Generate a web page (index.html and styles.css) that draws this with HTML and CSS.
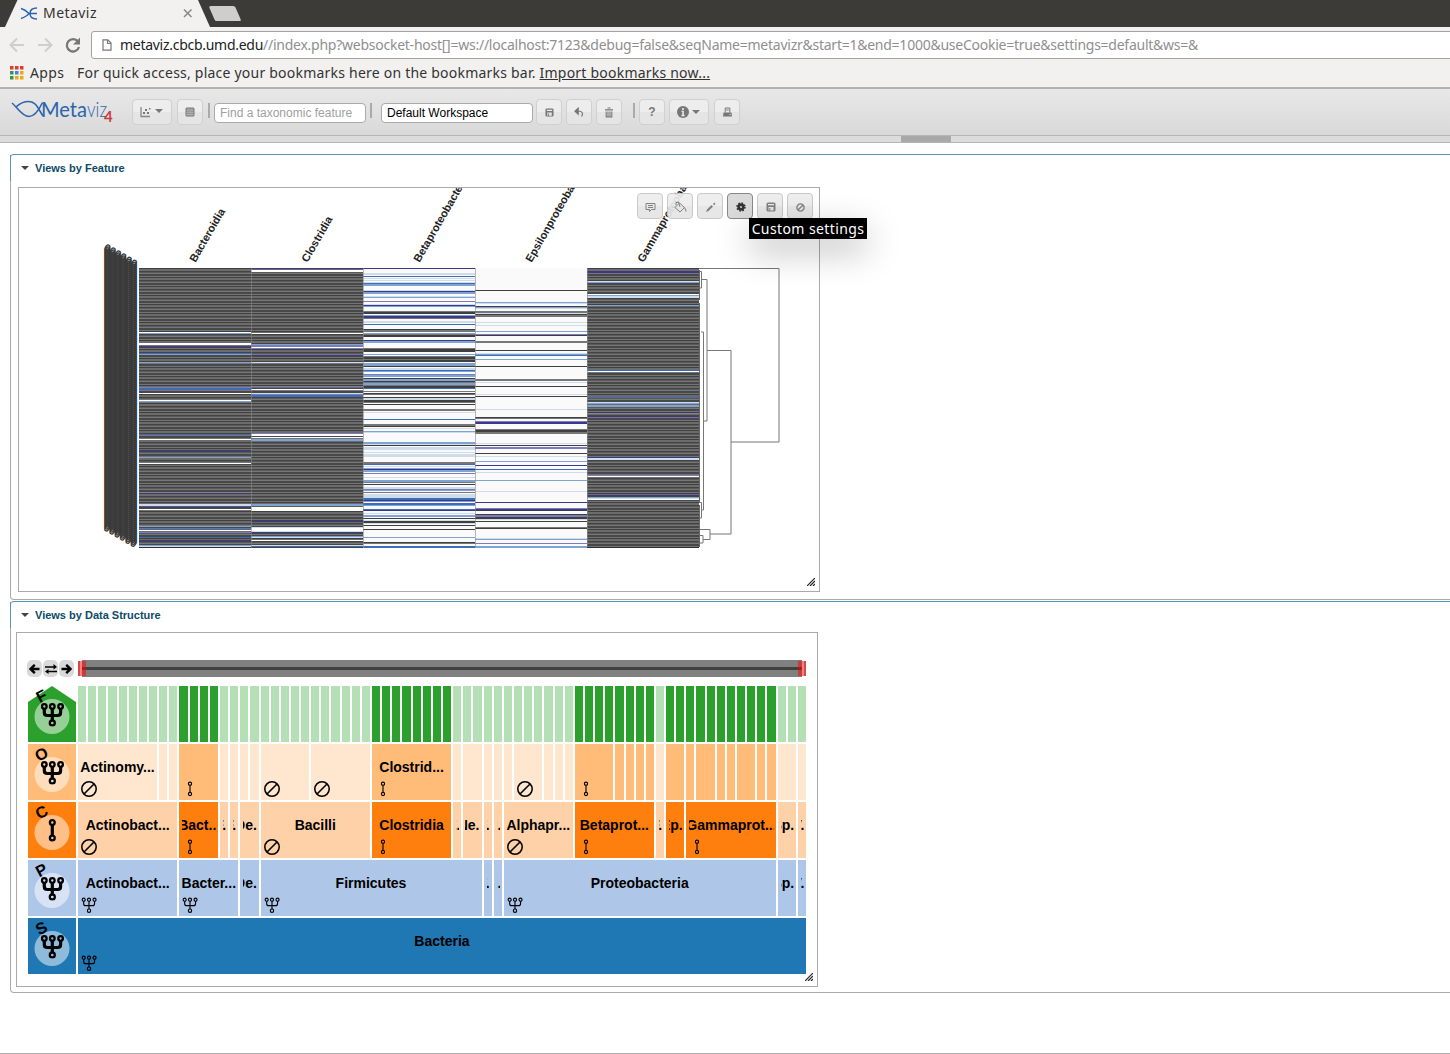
FILE: index.html
```html
<!DOCTYPE html>
<html lang="en">
<head>
<meta charset="utf-8">
<title>Metaviz</title>
<link rel="stylesheet" href="styles.css">
</head>
<body>
<svg class="defs" width="0" height="0" aria-hidden="true">
  <symbol id="fork" viewBox="0 0 24 24"><g fill="none" stroke="currentColor"><circle cx="4" cy="4" r="2.3"/><circle cx="12" cy="4" r="2.3"/><circle cx="20.300" cy="4" r="2.300"/><circle cx="12" cy="20.500" r="2.500"/><path class="stem" d="M4 6.500V10q0 3 3 3H17.300q3 0 3-3V6.500M12 6.500V18"/></g></symbol>
  <symbol id="single" viewBox="0 0 24 24"><g fill="none" stroke="currentColor"><circle cx="12" cy="4" r="2.400"/><circle cx="12" cy="19.500" r="2.400"/><path class="stem" d="M12 6.500V17"/></g></symbol>
  <symbol id="none" viewBox="0 0 24 24"><g fill="none" stroke="currentColor"><circle cx="12" cy="12" r="10.800"/><path d="M4.500 19.500 19.500 4.500"/></g></symbol>
  <symbol id="save" viewBox="0 0 10 10"><path fill="currentColor" fill-rule="evenodd" d="M2 .5h6q1.500 0 1.500 1.500v6q0 1.500-1.500 1.500H2Q.5 9.500.5 8V2Q.5.500 2 .500zM2 2v1.300h6V2zM2.500 5v3.500h5V5zM3.300 6h1v2.500h-1z"/></symbol>
</svg>

<header class="browser">
  <div class="tabs">
    <svg width="250" height="27" viewBox="0 0 250 27"><path d="M5 27 17.500 0H198L210 27z" fill="#f2f1f0"/><path d="M211 6h22q2 0 2.500 1.500l5 11.500q1 2-1 2h-23q-1.500 0-2-1.500l-5-11.500q-.8-2 1.500-2z" fill="#d0cecd"/><path d="M21 8.500q4 1 8 5l-2 2q-3 2-6 3M37 8q-7 0-7 5.500t7 5.500M29 13.500h8" stroke="#2c64ad" stroke-width="1.500" fill="none"/><path d="m184 9.500 7.500 7.500m0-7.500-7.500 7.500" stroke="#888" stroke-width="1.500"/></svg>
    <span class="tab-title">Metaviz</span>
  </div>
  <div class="address-row">
    <svg width="90" height="32" viewBox="0 0 90 32"><g fill="none" stroke="#d0cecd" stroke-width="2"><path d="M24 18H11m6-6.500L10.500 18l6.500 6.500M38 18h13m-6-6.500 6.500 6.500-6.500 6.500"/></g><path d="M78 14.500a6.200 6.200 0 1 0 1 5.500" fill="none" stroke="#777" stroke-width="2.300"/><path d="M80 10.500v7h-7z" fill="#777"/></svg>
    <div class="address"><svg width="10" height="12" viewBox="0 0 10 12"><path d="M1 .8h4.800L9 4v7.200H1zM5.500 1v3.500H9" fill="none" stroke="#777" stroke-width="1.200"/></svg><span class="url"><b>metaviz.cbcb.umd.edu</b>//index.php?websocket-host[]=ws://localhost:7123&amp;debug=false&amp;seqName=metavizr&amp;start=1&amp;end=1000&amp;useCookie=true&amp;settings=default&amp;ws=&amp;</span></div>
  </div>
  <div class="bookmarks">
    <svg width="14" height="14" viewBox="0 0 14 14"><path d="M0 0h3.500v3.500H0zM5 0h3.500v3.500H5zM10 0h3.500v3.500H10z" fill="#e33b2e"/><path d="M0 5h3.500v3.500H0zM0 10h3.500v3.500H0z" fill="#2d9a50"/><path d="M5 5h3.500v3.500H5z" fill="#3b83ee"/><path d="M10 5h3.500v3.500H10zM5 10h3.500v3.500H5zM10 10h3.500v3.500H10z" fill="#efaa14"/></svg>
    <span class="apps">Apps</span><span class="hint">For quick access, place your bookmarks here on the bookmarks bar. <u>Import bookmarks now...</u></span>
  </div>
</header>

<nav class="toolbar">
  <svg class="logo" width="104" height="28" viewBox="0 0 104 28"><path d="M1 4C6 8 11 17.500 18 17.500 24 17.500 28 11 31.500 3.500M5 8C9 4 13 2.500 18 2.500c7 0 9 7 14 14.500" fill="none" stroke="#2c64ad" stroke-width="1.600"/><text x="30" y="18" textLength="46" lengthAdjust="spacingAndGlyphs" class="logo-meta">Meta</text><text x="76" y="18" textLength="20" lengthAdjust="spacingAndGlyphs" class="logo-viz">viz</text><text x="93" y="22.500" class="logo-four">4</text></svg>
  <button class="btn wide first"><svg width="24" height="12" viewBox="0 0 24 12"><path d="M1 1v9.500h9" fill="none" stroke="#888" stroke-width="1.300"/><path d="M3 6h2v2H3zM5 3h2v2H5zM7 6h2v2H7zM9 2h1.500v1.500H9zM15 3h8l-4 4z" fill="#777"/></svg></button>
  <button class="btn"><svg width="10" height="10" viewBox="0 0 10 10"><rect x=".5" y=".5" width="9" height="9" rx="1.500" fill="#777"/><path d="M1 3h8M1 5.200h8M1 7.400h8M3 1v8M5 1v8M7 1v8" stroke="#ddd" stroke-width=".5"/></svg></button>
  <i class="sep s1"></i>
  <input class="field f1" placeholder="Find a taxonomic feature">
  <i class="sep s2"></i>
  <input class="field f2" value="Default Workspace">
  <button class="btn save"><svg width="9" height="9"><use href="#save"/></svg></button>
  <button class="btn undo"><svg width="10" height="10" viewBox="0 0 10 10"><path d="M4 .8V4q4.500 0 4.500 3 0 1-1 2.500M4.200 1.200 1 4.200l3.200 3z" fill="none" stroke="#777" stroke-width="1.200"/><path d="M4 1.200 1 4.200l3 3z" fill="#777"/></svg></button>
  <button class="btn trash"><svg width="10" height="11" viewBox="0 0 10 11"><path d="M3.500 1h3M1 2.800h8" stroke="#777" stroke-width="1.200"/><path d="M2.200 4.500v5.500h5.600V4.500M4 4.500V10M6 4.500V10" fill="none" stroke="#777" stroke-width="1.100"/></svg></button>
  <i class="sep s3"></i>
  <button class="btn help">?</button>
  <button class="btn wide info"><svg width="24" height="12" viewBox="0 0 24 12"><circle cx="6" cy="6" r="6" fill="#777"/><path d="M6 2v2M4.500 5.500H6v4M4.500 9.500h3" stroke="#eee" stroke-width="1.600"/><path d="M15 4h8l-4 4z" fill="#777"/></svg></button>
  <button class="btn print"><svg width="9" height="10" viewBox="0 0 9 10"><path d="M2.200 5.500V1h4.600v4.500M3.200 3h2.500" fill="none" stroke="#777"/><path d="M.5 5.500h8L9 9.500H0z" fill="#777"/><path d="M6.500 7.500h1" stroke="#eee"/></svg></button>
</nav>
<div class="splitter"><i></i></div>

<main>
  <section class="panel feature">
    <h2><i></i>Views by Feature</h2>
    <div class="chart heat">
      <svg id="heatmap" width="800" height="403" viewBox="19 188 800 403"></svg>
      <div class="actions">
        <button class="btn"><svg width="11" height="11" viewBox="0 0 11 11"><path d="M1 1.500h9v6H6.500L4.500 9.500v-2H1zM3 3.500h5M3 5.500h5" fill="none" stroke="#777"/></svg></button>
        <button class="btn"><svg width="13" height="12" viewBox="0 0 13 12"><path d="M1 6.500 5.500 2l5 4.500L6 11zM2 4V1.500L4.500 1 6 6M10 6.500q2 1 2 4" fill="none" stroke="#777"/></svg></button>
        <button class="btn"><svg width="11" height="11" viewBox="0 0 11 11"><path d="m1 10 1-2.500 4.500-4.500L8 4.500 3.500 9zM8 2l1.500-1.500L10.500 2 9 3.200z" fill="#777"/></svg></button>
        <button class="btn on"><svg width="10" height="10" viewBox="0 0 10 10"><circle cx="5" cy="5" r="3.700" fill="#333"/><circle cx="5" cy="5" r="4" fill="none" stroke="#333" stroke-width="1.500" stroke-dasharray="1.600 1.540"/><circle cx="5" cy="5" r="1.100" fill="#ccc"/></svg></button>
        <button class="btn"><svg width="10" height="10"><use href="#save"/></svg></button>
        <button class="btn"><svg width="9" height="9" viewBox="0 0 8 8"><circle cx="4" cy="4" r="3.200" fill="none" stroke="#777" stroke-width="1.200"/><path d="m1.500 6.500 5-5" stroke="#777" stroke-width="1.100"/></svg></button>
      </div>
      <div class="tooltip">Custom settings</div>
      <svg class="grip" width="8" height="8"><path d="M0 8 8 0M3 8l5-5M6 8l2-2" stroke="#222" stroke-width="1.200"/></svg>
    </div>
  </section>
  <section class="panel structure">
    <h2><i></i>Views by Data Structure</h2>
    <div class="chart icicle">
      <div class="slider-row">
        <div class="nav">
          <span><svg width="11" height="10" viewBox="0 0 11 10"><path d="M10.500 5H2M5.800.8 1.500 5l4.300 4.200" fill="none" stroke="#000" stroke-width="2.400"/></svg></span>
          <span><svg width="12" height="10" viewBox="0 0 12 10"><path d="M0 3h9M3 7.500h9" stroke="#000" stroke-width="1.500"/><path d="m8.500 0 3.500 3-3.500 2.500zM3.500 5 0 7.500 3.500 10z"/></svg></span>
          <span><svg width="11" height="10" viewBox="0 0 11 10"><path d="M.5 5H9M5.200.8 9.500 5 5.200 9.200" fill="none" stroke="#000" stroke-width="2.400"/></svg></span>
        </div>
        <svg class="slider" width="728" height="17"><path d="M4 0h720v17H4z" fill="#808080"/><path d="M4 7h720v3H4z" fill="#404040"/><path d="M0 1h8v15H0zM720 1h8v15h-8z" fill="#f00" fill-opacity=".5"/><path d="M0 1h2v15H0zM726 1h2v15h-2z" fill="#c04040" fill-opacity=".8"/></svg>
      </div>
      <div class="levels">
        <div class="heads" id="heads"></div>
        <div class="cells" id="cells"></div>
      </div>
      <svg class="grip" width="8" height="8"><path d="M0 8 8 0M3 8l5-5M6 8l2-2" stroke="#222" stroke-width="1.200"/></svg>
    </div>
  </section>
</main>
<script src="charts.js"></script>
</body>
</html>
```
FILE: styles.css
```css
* { box-sizing: border-box; }
html, body { height: 100%; }
body { margin: 0; background: #fff; font-family: "Liberation Sans", Arial, sans-serif; overflow: hidden; display: flex; flex-direction: column; border-bottom: 1px solid #aaa; }
svg { display: block; flex: none; }
.defs { position: absolute; }
button { font: inherit; padding: 0; }

.browser { background: #f2f1f0; height: 89px; flex: none; border-bottom: 2px solid #b3b1b1; font-family: "Noto Sans", sans-serif; font-size: 14px; color: #333; }
.tabs { height: 27px; background: #3c3b37; display: grid; }
.tabs > * { grid-area: 1 / 1; }
.tab-title { padding-left: 43px; line-height: 26px; letter-spacing: .45px; }
.address-row { height: 34px; display: flex; }
.address { margin: 4px -6px 0 1px; height: 28px; flex: 1; border: 1px solid #a5a3a2; border-radius: 3px; background: #fff; display: flex; align-items: center; padding-left: 10px; }
.url { margin-left: 8px; padding-bottom: 2px; color: #8f8f8f; white-space: nowrap; letter-spacing: -.25px; }
.url b { font-weight: 400; color: #222; letter-spacing: -.28px; }
.bookmarks { height: 26px; display: flex; align-items: center; padding: 0 0 3px 10px; white-space: nowrap; }
.bookmarks svg { margin-top: 1px; }
.apps { margin-left: 6px; width: 47px; letter-spacing: .4px; }
.hint { letter-spacing: .22px; }

.toolbar { height: 47px; flex: none; display: flex; align-items: flex-start; padding: 10px 0 0 11px; background: linear-gradient(#e8e8e8, #d9d9d9); border-bottom: 1px solid #b5b5b5; }
.logo text { fill: #2c64ad; font-family: Lato, sans-serif; }
.logo-meta { font-size: 21px; }
.logo-viz { font-size: 21px; font-weight: 300; }
.logo .logo-four { fill: #cf3a3f; font-size: 15px; font-weight: 700; }
.btn { width: 26px; height: 26px; border: 1px solid #d0d0d0; border-radius: 4px; background: linear-gradient(#ededed 50%, #e5e5e5 50%); color: #777; display: flex; align-items: center; justify-content: center; flex: none; }
.toolbar .btn { margin-right: 4px; }
.btn.wide { width: 40px; }
.toolbar .first { margin-left: 17px; margin-right: 5px; }
.sep { width: 2px; height: 15px; background: #aaa; margin-top: 4px; flex: none; }
.s1 { margin-left: 1px; }
.s2 { margin: 4px 9px 0 4px; }
.s3 { margin: 4px 4px 0 7px; }
.field { width: 152px; height: 20px; margin-top: 4px; border: 1px solid #aaa; border-radius: 4px; padding: 0 5px; font: 12px "Liberation Sans", Arial, sans-serif; color: #000; background: #fff; }
.field::placeholder { color: #a0a0a0; }
.f1 { margin-left: 4px; }
.save { margin-left: 3px; }
.help { font-weight: 700; font-size: 12px; }
.toolbar .info { margin-right: 5px; }
.splitter { height: 7px; flex: none; background: #dcdcdc; border-bottom: 1px solid #b5b5b5; padding-left: 901px; }
.splitter i { display: block; width: 50px; height: 6px; background: #a8a8a8; }

main { padding: 11px 0 0 10px; width: 1470px; }
.panel { border: 1px solid #aaa; border-top-color: #5893bb; border-radius: 4px; position: relative; }
.panel::before { content: ""; position: absolute; left: -1px; top: 0; width: 1px; height: 26px; background: #5893bb; }
.feature { height: 446px; margin-bottom: 1px; padding-left: 7px; }
.structure { height: 392px; padding-left: 5px; }
h2 { margin: 0; height: 32px; font-size: 11px; line-height: 26px; color: #0d4a68; display: flex; }
h2 i { border: 4px solid transparent; border-top-color: #444; margin: 11px 6px 0 3px; height: 4px; }
.structure h2 { height: 30px; }
.structure h2 i { margin-left: 5px; }
.chart { position: relative; width: 802px; border: 1px solid #aaa; background: #fff; }
.heat { height: 405px; }
.icicle { height: 355px; padding: 27px 10px 0; }
.grip { position: absolute; right: 4px; bottom: 5px; }
.actions { position: absolute; right: 6px; top: 5px; display: flex; gap: 4px; }
.actions .btn { opacity: .92; border-color: #c5c5c5; padding: 2px 0 0 1px; }
.actions .btn.on { border-color: #888; background: #dadada; opacity: 1; }
.tooltip { position: absolute; left: 730px; top: 30px; width: 118px; height: 21px; background: #000; color: #fff; font: 14px/21px "Noto Sans", sans-serif; letter-spacing: .4px; text-align: center; white-space: nowrap; box-shadow: 0 12px 35px rgba(0, 0, 0, .28); }
.col-label { font: bold 11px "Liberation Sans", Arial, sans-serif; fill: #222; }
.row-label { font: bold 11px "Liberation Sans", Arial, sans-serif; fill: #3a3a3a; }

.slider-row { display: flex; height: 26px; }
.nav { width: 51px; display: flex; gap: 1px; }
.nav span { width: 15px; height: 17px; border-radius: 5px; background: #d9d9d9; display: grid; place-items: center; }
.levels { display: flex; gap: 2px; padding-left: 1px; }
.heads { width: 48px; display: grid; grid-auto-rows: 56px; gap: 2px; }
.heads text { font: bold 16px "Liberation Sans", Arial, sans-serif; }
.heads { --stem: 3.200px; }
.stem { stroke-width: var(--stem, 1.700px); }
.cells { width: 728px; display: grid; grid-template-columns: repeat(72, minmax(0, 1fr)); grid-auto-rows: 56px; gap: 2px; }
.cell { overflow: hidden; font-weight: 700; font-size: 14px; padding: 14px 2px 0; min-width: 0; }
.cell span { display: flex; justify-content: center; overflow: hidden; white-space: nowrap; height: 18px; line-height: 18px; }
.cell.tight { padding-left: 3px; }
.cell.tight svg { margin-left: 0; }
.cell svg { margin: 5px 0 0 1px; width: 16px; height: 16px; stroke-width: 1.700; }
.cell svg.none { stroke-width: 2.300; }
.family { background: #b5dfb5; } .family.sel { background: #2ca02c; }
.order { background: #ffe7cf; } .order.sel { background: #ffbb78; }
.class { background: #ffd1a8; } .class.sel { background: #ff7f0e; }
.phylum { background: #aec7e8; }
.species { background: #1f77b4; }
```
FILE: charts.js
```js
const NS = 'http://www.w3.org/2000/svg';
const heat = document.getElementById('heatmap');
const add = (tag, attrs, text) => {
  const el = document.createElementNS(NS, tag);
  for (const k in attrs) el.setAttribute(k, attrs[k]);
  if (text) el.textContent = text;
  heat.appendChild(el);
};

// Colour keys of the abundance scale.
const color = { n: '#38388c', p: '#7d7cb8', b: '#3f6db5', s: '#7fa3d2', l: '#cfdcea', w: '#ffffff', k: '#3f3f3f', g: '#777777' };
const columns = [
  { name: 'Bacteroidia', dark: true, rows: '332 1 w,333 1 s,343 2 w,347 1 n,353 1 b,354 1 s,362 1 s,387 1 p,388 2 b,393 1 w,400 1 w,401 1 s,434 1 b,439 1 w,450 1 n,457 1 s,463 1 w,492 1 p,504 2 l,507 1 n,509 1 w,526 1 s,529 1 b,530 1 w,532 1 p,537 1 b,540 1 n,545 1 s,546 1 l' },
  { name: 'Clostridia', dark: true, rows: '268 1 n,270 2 w,333 1 w,344 1 s,345 2 p,347 1 w,348 1 p,355 1 n,362 1 l,386 1 p,389 1 w,393 1 l,394 1 p,395 2 b,433 1 p,434 2 w,437 1 w,439 2 s,504 2 s,507 4 w,521 1 n,527 1 l,528 3 w,531 1 l,533 1 n,536 1 s,537 1 l,540 1 w,545 1 l,546 1 b' },
  { name: 'Betaproteobacteria', rows: '268 1 n,273 2 l,276 1 b,278 1 l,280 1 l,282 1 l,283 1 b,284 2 s,290 1 l,291 1 n,292 2 s,296 1 l,297 1 s,301 1 p,304 1 l,305 1 n,306 1 s,311 1 g,312 2 k,315 1 s,316 2 n,318 1 g,321 2 l,324 1 b,329 1 k,330 2 g,333 1 s,334 1 g,335 2 k,340 1 n,341 2 s,348 1 g,349 3 k,354 1 s,356 1 g,357 2 k,359 1 g,360 2 k,363 3 s,366 1 k,368 2 l,370 1 b,371 1 s,374 1 p,375 2 s,378 1 k,379 2 s,381 1 k,382 1 g,383 2 s,385 1 g,386 2 k,388 1 b,391 1 g,393 1 k,394 1 g,397 1 k,398 2 l,400 2 k,402 1 g,404 1 k,409 2 g,412 1 l,419 1 b,424 2 g,426 1 k,428 1 l,431 1 s,432 1 l,442 2 s,444 1 l,445 1 k,447 3 l,452 1 l,454 3 l,462 2 g,464 1 b,466 1 l,468 1 s,469 1 n,470 2 s,473 1 p,477 1 l,480 2 s,482 1 g,484 1 k,487 2 l,489 1 p,490 1 s,492 1 g,494 4 l,498 2 b,500 1 n,501 1 s,503 2 b,505 1 s,509 1 b,510 1 n,513 1 l,515 2 s,518 1 k,520 1 l,521 2 k,523 1 l,525 1 k,529 1 k,537 1 s,542 1 k,543 1 g,546 2 b' },
  { name: 'Epsilonproteobacteria', rows: '290 1 k,302 1 s,303 1 l,306 1 k,307 1 s,308 1 l,311 2 g,313 1 l,314 1 k,315 2 g,322 1 l,325 1 l,331 1 s,334 1 p,335 1 k,341 2 g,350 1 k,353 1 l,354 1 s,355 1 b,359 1 s,366 1 k,379 2 g,382 1 l,386 1 k,394 1 l,396 1 k,409 1 l,417 1 k,418 1 g,421 1 p,422 2 n,429 1 g,430 2 k,432 2 g,443 1 l,445 1 k,447 2 p,453 1 k,456 1 l,461 1 s,465 1 n,469 1 b,472 1 l,480 1 s,491 1 l,502 1 n,508 1 p,509 1 n,510 1 k,514 1 k,515 2 p,517 2 k,519 1 l,521 1 k,527 1 g,528 1 k,538 1 l,539 1 s,543 1 p,546 2 s' },
  { name: 'Gammaproteobacteria', dark: true, rows: '271 2 n,281 1 l,282 1 s,294 1 w,295 1 s,296 2 l,305 1 s,370 1 b,371 1 w,397 1 b,402 1 l,403 1 s,405 2 s,413 1 p,416 1 n,457 1 n,458 2 l,475 1 p,476 1 w,495 1 n,497 1 s,498 1 l,499 1 w' }
];

columns.forEach((col, i) => {
  const x = 139 + i * 112;
  add('rect', { x, y: 268, width: 112, height: 280, fill: '#fafafa' });
  if (col.dark) {
    const shades = ['#404040', '#6c6c6c', '#6c6c6c', '#444444', '#5a5a5a', '#777777', '#484848', '#484848', '#747474'];
    for (let y = 268; y < 548; y++) add('rect', { x, y, width: 112, height: 1, fill: shades[(y - 268) % 9] });
  }
  col.rows.split(',').forEach(r => {
    const [y, h, c] = r.split(' ');
    add('rect', { x, y, width: 112, height: h, fill: color[c] });
  });
  add('rect', { x, y: 268, width: 1, height: 280, fill: '#888', 'fill-opacity': i ? .6 : 0 });
  add('text', { class: 'col-label', transform: `translate(${x + 56.500} 263) rotate(-60)` }, col.name);
});
add('path', { d: 'M139 547.500h112M587 547.500h112', stroke: '#2e2e2e' });

for (let y = 268; y <= 548; y += 2) add('text', { class: 'row-label', transform: `translate(134.500 ${y}) rotate(30)`, 'text-anchor': 'end' }, '000000');

add('path', { fill: 'none', stroke: '#777', d: 'M699 268.500H779V442H731M707 350.500H731V534H710M701 279.500H707V421H703.500M701 332H703.500V510H701M699 271.500H701.500V288H699M700 529.500H710V539.500H703M699 535.500H703V543H699M699 502.500H701.500V518H699' });
add('path', { fill: 'none', stroke: '#666', d: 'M699.500 270V300M699.500 303V502M699.500 505V547' });

// Taxonomy levels: [width in leaves, label, icon, selected].
const light = n => Array.from({ length: n }, () => [1]);
const dark = n => Array.from({ length: n }, () => [1, '', '', 1]);
const levels = [
  ['family', 'F', 'fork', '#2ca02c', [...light(10), ...dark(4), ...light(15), ...dark(8), ...light(12), ...dark(8), ...light(1), ...dark(11), ...light(3)]],
  ['order', 'O', 'fork', '#ffbb78', [[8, 'Actinomy...', 'none'], [1], [1], [4, '', 'single', 1], ...light(4), [5, '', 'none'], [6, '', 'none'], [8, 'Clostrid...', 'single', 1], [1], [2], ...light(3), [3, '', 'none'], ...light(3), [4, '', 'single', 1], ...dark(4), [1], [2, '', '', 1], [1, '', '', 1], [2, '', '', 1], ...dark(2), [2, '', '', 1], ...dark(2), [2], [1]]],
  ['class', 'C', 'single', '#ff7f0e', [[10, 'Actinobact...', 'none'], [4, 'Bact...', 'single', 1], [1, 'F...'], [1, 'F...'], [2, 'De...'], [11, 'Bacilli', 'none'], [8, 'Clostridia', 'single', 1], [1, 'E...'], [2, 'Ne...'], [1, 'F...'], [1, 'N...'], [7, 'Alphapr...', 'none'], [8, 'Betaprot...', 'single', 1], [1, 'F...'], [2, 'Ep...', '', 1], [9, 'Gammaprot...', 'single', 1], [2, 'Sp...'], [1, 'V...']]],
  ['phylum', 'P', 'fork', '#aec7e8', [[10, 'Actinobact...', 'fork'], [6, 'Bacter...', 'fork'], [2, 'De...'], [22, 'Firmicutes', 'fork'], [1, 'F...'], [1, 'N...'], [27, 'Proteobacteria', 'fork'], [2, 'Sp...'], [1, 'V...']]],
  ['species', 'S', 'fork', '#1f77b4', [[72, 'Bacteria', 'fork']]]
];
const clipped = ['Bact...', 'Gammaprot...', 'Ep...', 'De...', 'Sp...'];
const icon = name => `<svg class="${name}" viewBox="0 0 24 24"><use href="#${name}"/></svg>`;
let heads = '', cells = '';
levels.forEach(([level, letter, head, fill, items], i) => {
  const shape = i ? 'M0 0h48v56H0z' : 'M0 16 24 0l24 16v40H0z';
  heads += `<svg width="48" height="56" overflow="visible"><path d="${shape}" fill="${fill}"/><circle cx="24" cy="30.500" r="17.500" fill="#fff" fill-opacity=".5"/><svg x="12.300" y="16.500" width="24" height="24" stroke-width="2.300"><use href="#${head}"/></svg><text text-anchor="middle" transform="translate(16 15) rotate(-28)">${letter}</text></svg>`;
  items.forEach(([n, label = '', mark, sel]) => {
    const tight = clipped.includes(label) || (n === 1 && label);
    cells += `<div class="cell ${level}${sel ? ' sel' : ''}${tight ? ' tight' : ''}" style="grid-column: span ${n}"><span>${label}</span>${mark ? icon(mark) : ''}</div>`;
  });
});
document.getElementById('heads').innerHTML = heads;
document.getElementById('cells').innerHTML = cells;
```
